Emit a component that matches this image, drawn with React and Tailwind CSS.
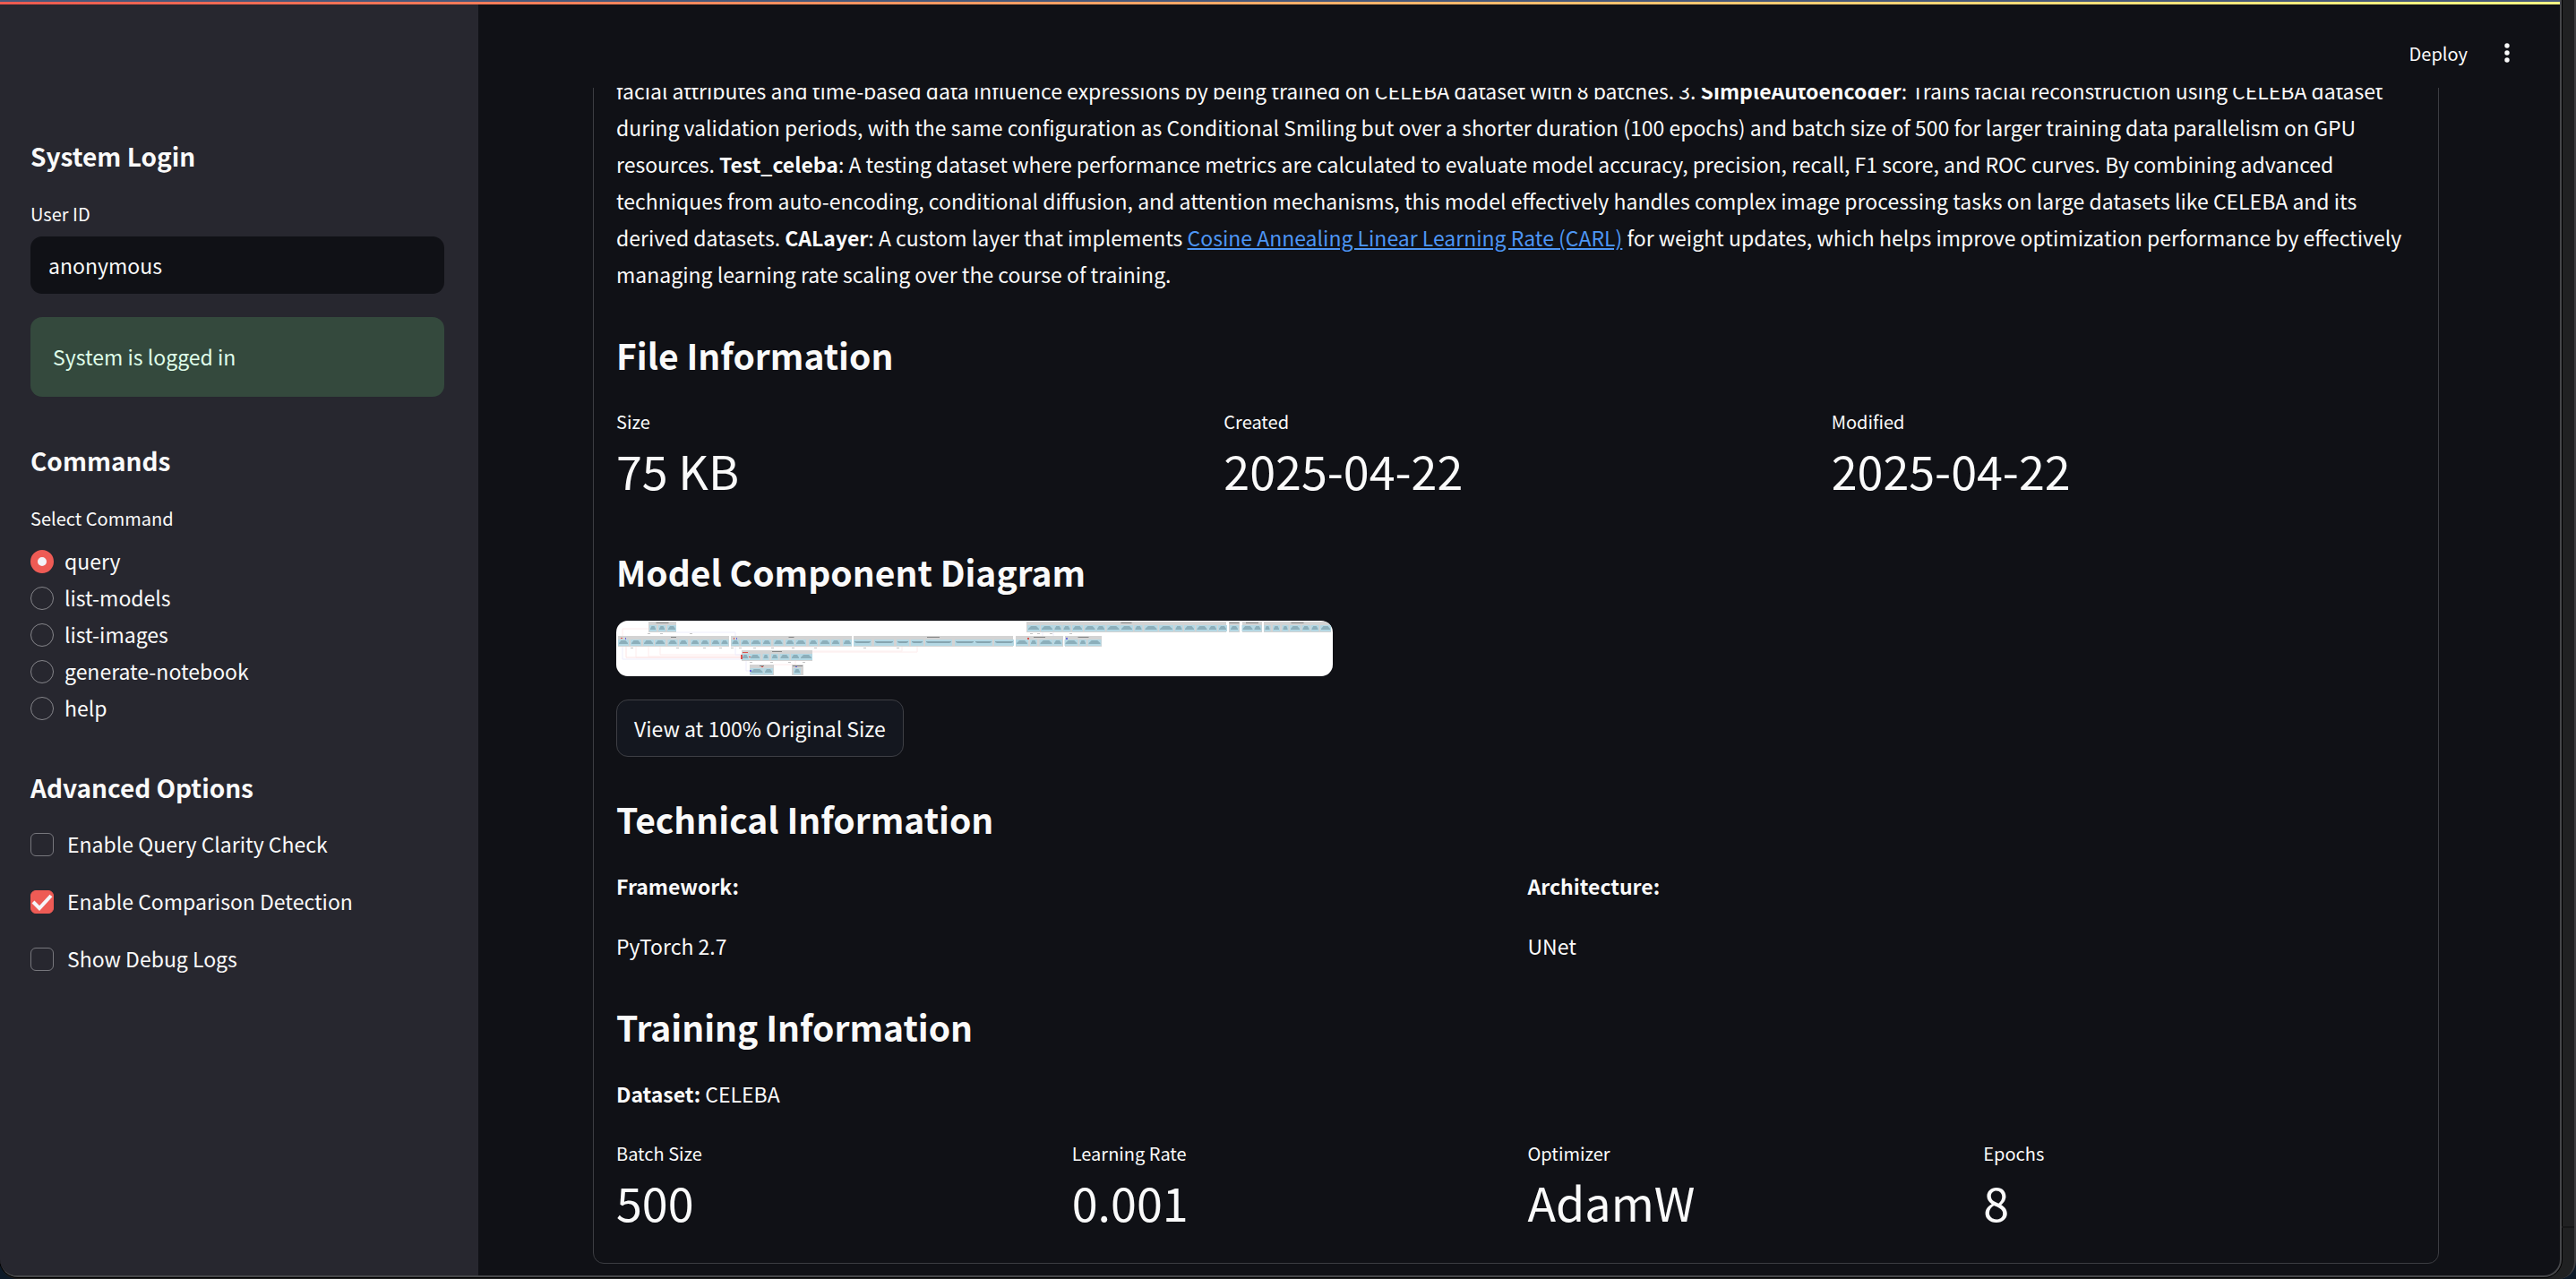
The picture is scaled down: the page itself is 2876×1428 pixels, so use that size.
import React, { useState } from "react";

const COMMANDS = ["query", "list-models", "list-images", "generate-notebook", "help"];

const OPTIONS = [
  { id: "clarity", label: "Enable Query Clarity Check", on: false },
  { id: "comparison", label: "Enable Comparison Detection", on: true },
  { id: "debug", label: "Show Debug Logs", on: false },
];

/* Diagram groups: x, y, width, title width and nodes as [centre, width]. */
const GROUPS = [
  { x: 36, y: 1, w: 31, title: 14, nodes: [[41, 6], [51, 6], [62, 8]] },
  {
    x: 2, y: 17, w: 124, title: 6,
    nodes: [[8, 10], [22, 10], [36, 10], [49, 10], [63, 9], [75, 8], [88, 8], [99, 8], [111, 8], [121, 7]],
  },
  {
    x: 128, y: 17, w: 135, title: 6,
    nodes: [[133, 7], [144, 8], [156, 10], [168, 8], [181, 9], [194, 8], [206, 10], [220, 8], [233, 10], [245, 8], [258, 8]],
  },
  {
    x: 265, y: 17, w: 178, title: 14, flat: true,
    nodes: [[275, 18], [299, 20], [320, 12], [336, 12], [360, 28], [389, 20], [410, 18], [433, 20]],
  },
  { x: 446, y: 17, w: 53, title: 13, nodes: [[453, 12], [466, 6], [480, 13], [493, 8]] },
  { x: 501, y: 17, w: 41, title: 12, nodes: [[508, 13], [521, 6], [534, 13]] },
  {
    x: 458, y: 1, w: 223, title: 12,
    nodes: [
      [466, 12], [481, 12], [493, 7], [503, 7], [515, 10], [529, 11], [541, 8], [555, 13], [570, 12],
      [583, 7], [597, 13], [614, 14], [628, 7], [640, 10], [654, 11], [666, 8], [677, 8],
    ],
  },
  { x: 684, y: 1, w: 12, title: 11, nodes: [[690, 8]] },
  { x: 699, y: 1, w: 22, title: 14, nodes: [[705, 11], [716, 7]] },
  {
    x: 723, y: 1, w: 75, title: 14,
    nodes: [[727, 5], [737, 6], [747, 5], [758, 10], [770, 7], [780, 7], [792, 10]],
  },
  {
    x: 140, y: 33, w: 79, title: 11,
    nodes: [[144, 6], [155, 10], [167, 5], [177, 6], [188, 9], [200, 8], [212, 12]],
  },
  { x: 149, y: 49, w: 27, title: 5, nodes: [[157, 13], [170, 8]] },
  { x: 196, y: 49, w: 13, title: 11, nodes: [[202, 6]] },
];

const TICKS = [
  [36, 15], [50, 15], [83, 15], [17, 31], [68, 31], [98, 31], [116, 31], [129, 31], [138, 31], [154, 31], [174, 31],
  [197, 31], [222, 31], [277, 31], [314, 31], [463, 15], [471, 15], [485, 15], [507, 15], [150, 47], [173, 47], [193, 47], [209, 47],
];

function ComponentDiagram() {
  return (
    <svg
      role="img"
      aria-label="Model component diagram"
      viewBox="0 0 800 62"
      className="block w-[800px] max-w-full rounded-[13px] bg-white"
    >
      <defs>
        <filter id="soften" x="0" y="0" width="100%" height="100%">
          <feGaussianBlur stdDeviation="0.6" />
        </filter>
      </defs>
      <g filter="url(#soften)">
        <g fill="none" strokeWidth="1">
          <path d="M36 9H7V17M22 29V41H140M36 29V40H140M49 29V38H140M319 29V34H219M336 29V35H219" stroke="#fdecec" />
          <path d="M11 29V41H140" stroke="#fce4e4" />
          <path d="M7 29V43H140M67 13H133V17M133 29V38H140M145 45V56H149M476 13V17M488 13V17" stroke="#eeedfc" />
          <path d="M156 29H225M200 45V49H176" stroke="#fdecec" />
        </g>
        {GROUPS.map((g) => (
          <g key={g.x + "-" + g.y}>
            <rect x={g.x} y={g.y} width={g.w} height="12" fill="#d3d3d3" />
            <rect x={g.x + g.w / 2 - g.title / 2} y={g.y + 1} width={g.title} height="1" fill="#858585" />
            {g.nodes.map(([c, w]) => (
              <g key={c}>
                <rect x={c - w / 2 - 1} y={g.y + 4} width={w + 2} height="7" fill="#b4d8e4" />
                {g.flat ? (
                  <path d={`M${c - w / 2} ${g.y + 6}h${w}v1l-2 1h${4 - w}l-2-1z`} fill="#86a5b0" />
                ) : (
                  <path d={`M${c - w / 4} ${g.y + 5}h${w / 2}l${w / 4} 3v1h${-w}v-1z`} fill="#8cafbb" />
                )}
              </g>
            ))}
          </g>
        ))}
        {TICKS.map(([x, y]) => (
          <rect key={x + "-" + y} x={x - 1} y={y - 1} width="3" height="1" fill="#c4c4c4" />
        ))}
        <path d="M139 38h2v5h-2zM141 35h6v1h-6zM148 40h2v1h-2zM162 51h2v1h-2zM5 19h2v1h-2zM131 19h1v2h-1zM459 19h2v2h-2z" fill="#d9534f" />
        <path d="M10 19h1v2h-1zM134 19h1v2h-1zM502 19h2v2h-2zM149 55h2v2h-2zM200 51h2v1h-2z" fill="#6a6ae0" />
      </g>
    </svg>
  );
}

function Metric({ label, value }) {
  return (
    <div>
      <div className="text-[20px] leading-8">{label}</div>
      <div className="mt-[7px] text-[52px] leading-[62px]">{value}</div>
    </div>
  );
}

function Heading({ children, className = "" }) {
  return <h3 className={"text-[39px] leading-[54px] font-bold " + className}>{children}</h3>;
}

function SideHeading({ children, className = "" }) {
  return <h2 className={"text-[28px] leading-[34px] font-bold " + className}>{children}</h2>;
}

function Sidebar() {
  const [user, setUser] = useState("anonymous");
  const [command, setCommand] = useState("query");
  const [options, setOptions] = useState(OPTIONS);

  return (
    <aside className="w-[534px] shrink-0 bg-[#27272f] pt-[152px] pr-[38px] pl-[34px]">
      <SideHeading>System Login</SideHeading>
      <label htmlFor="user" className="mt-8 block text-[20px] leading-8">
        User ID
      </label>
      <input
        id="user"
        type="text"
        value={user}
        onChange={(e) => setUser(e.target.value)}
        className="mt-[9px] block h-16 w-full rounded-[13px] bg-[#101116] px-5 text-[23px] outline-none"
      />
      <div role="status" className="mt-[26px] rounded-[13px] bg-[#34493d] px-[25px] py-6 text-[#dffde9]">
        System is logged in
      </div>

      <SideHeading className="mt-[54px]">Commands</SideHeading>
      <fieldset className="mt-8">
        <legend className="mb-[11px] text-[20px] leading-8">Select Command</legend>
        {COMMANDS.map((name) => (
          <label key={name} className="flex items-center gap-3">
            <input
              type="radio"
              name="command"
              checked={command === name}
              onChange={() => setCommand(name)}
              className="size-[26px] shrink-0 appearance-none rounded-full border border-[#85858a] checked:border-8 checked:border-[#ee5b55] checked:bg-[#f3f3f8]"
            />
            {name}
          </label>
        ))}
      </fieldset>

      <SideHeading className="mt-[51px]">Advanced Options</SideHeading>
      <div className="mt-[26px] flex flex-col gap-[23px]">
        {options.map((o) => (
          <label key={o.id} className="flex items-center gap-[15px]">
            <span className="relative flex shrink-0">
              <input
                type="checkbox"
                checked={o.on}
                onChange={() =>
                  setOptions(options.map((p) => (p.id === o.id ? { ...p, on: !p.on } : p)))
                }
                className="size-[26px] appearance-none rounded-md border border-[#77777d] checked:border-[#ee5b55] checked:bg-[#ee5b55]"
              />
              {o.on && (
                <svg viewBox="0 0 26 26" className="pointer-events-none absolute inset-0 size-[26px]">
                  <path d="M3 13l7 7L23 6" fill="none" stroke="#f6f6fa" strokeWidth="4" />
                </svg>
              )}
            </span>
            {o.label}
          </label>
        ))}
      </div>
    </aside>
  );
}

export default function App() {
  return (
    <div className='flex h-screen overflow-hidden bg-[#0d1a28] font-["Noto_Sans_CJK_SC","Noto_Sans",sans-serif] text-[23px] leading-[41px] text-[#fafafa]'>
      <div className="flex min-w-0 flex-1 rounded-b-[20px] border-r-2 border-[#3e3e40] bg-[#202122] pb-[2px]">
        <div className="flex min-w-0 flex-1 flex-col overflow-hidden rounded-b-[20px] border-r-2 border-b-2 border-[#46474a] bg-[#101116] shadow-[0_0_0_1px_#000]">
          <div className="h-[2px] shrink-0 bg-[#47587a]" />
          <div className="h-[3px] shrink-0 bg-linear-to-r from-[#ec5a50] to-[#fffb84]" />
          <div className="flex min-h-0 flex-1">
            <Sidebar />
            <main className="flex min-w-0 flex-1 flex-col">
              <header className="flex h-[93px] shrink-0 items-center justify-end gap-[31px] pt-[15px] pr-[46px]">
                <button type="button" className="text-[20px]">
                  Deploy
                </button>
                <button type="button" aria-label="Main menu">
                  <svg viewBox="0 0 26 26" className="size-[26px]" fill="#fafafa">
                    <circle cx="13" cy="5" r="2.7" />
                    <circle cx="13" cy="13" r="2.7" />
                    <circle cx="13" cy="21" r="2.7" />
                  </svg>
                </button>
              </header>
              <div className="flex min-h-0 flex-1 flex-col justify-end overflow-hidden pr-[135px] pb-[13px] pl-32">
                <article className="shrink-0 rounded-xl border border-[#3c3d42] px-[25px] pt-10 pb-[37px]">
                  <p>
                    facial attributes and time-based data influence expressions by being trained on CELEBA dataset
                    with 8 batches. 3. <strong>SimpleAutoencoder</strong>: Trains facial reconstruction using CELEBA
                    dataset during validation periods, with the same configuration as Conditional Smiling but over a
                    shorter duration (100 epochs) and batch size of 500 for larger training data parallelism on GPU
                    resources. <strong>Test_celeba</strong>: A testing dataset where performance metrics are
                    calculated to evaluate model accuracy, precision, recall, F1 score, and ROC curves. By combining
                    advanced techniques from auto-encoding, conditional diffusion, and attention mechanisms, this
                    model effectively handles complex image processing tasks on large datasets like CELEBA and its
                    derived datasets. <strong>CALayer</strong>: A custom layer that implements{" "}
                    <a href="#carl" className="text-[#4d96f5] underline">
                      Cosine Annealing Linear Learning Rate (CARL)
                    </a>{" "}
                    for weight updates, which helps improve optimization performance by effectively managing learning
                    rate scaling over the course of training.
                  </p>

                  <Heading className="mt-[42px]">File Information</Heading>
                  <div className="mt-8 grid grid-cols-3 gap-[26px]">
                    <Metric label="Size" value="75 KB" />
                    <Metric label="Created" value="2025-04-22" />
                    <Metric label="Modified" value="2025-04-22" />
                  </div>

                  <Heading className="mt-[55px]">Model Component Diagram</Heading>
                  <div className="mt-7">
                    <ComponentDiagram />
                  </div>
                  <button
                    type="button"
                    className="mt-[26px] block h-16 rounded-[13px] border border-[#3e3f45] bg-[#14171f] px-[19px]"
                  >
                    View at 100% Original Size
                  </button>

                  <Heading className="mt-[42px]">Technical Information</Heading>
                  <dl className="mt-7 grid grid-cols-2 gap-[26px]">
                    <div>
                      <dt className="font-bold">Framework:</dt>
                      <dd className="mt-[26px]">PyTorch 2.7</dd>
                    </div>
                    <div>
                      <dt className="font-bold">Architecture:</dt>
                      <dd className="mt-[26px]">UNet</dd>
                    </div>
                  </dl>

                  <Heading className="mt-[42px]">Training Information</Heading>
                  <p className="mt-7">
                    <strong>Dataset:</strong> CELEBA
                  </p>
                  <div className="mt-[30px] grid grid-cols-4 gap-[26px]">
                    <Metric label="Batch Size" value="500" />
                    <Metric label="Learning Rate" value="0.001" />
                    <Metric label="Optimizer" value="AdamW" />
                    <Metric label="Epochs" value="8" />
                  </div>
                </article>
              </div>
            </main>
          </div>
        </div>
        <div className="flex w-[14px] shrink-0 flex-col justify-end pb-[55px]">
          <div className="h-[2px] bg-[#161718]" />
        </div>
      </div>
    </div>
  );
}
